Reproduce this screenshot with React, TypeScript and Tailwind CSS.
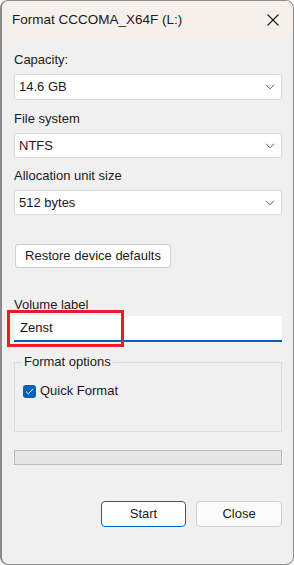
import React from 'react';

function Chevron() {
  return (
    <svg width="10" height="6" viewBox="0 0 10 6" className="shrink-0">
      <path d="M1 0.8 L5 4.8 L9 0.8" fill="none" stroke="#5c5c5c" strokeWidth="1" />
    </svg>
  );
}

function Field({ label, value, mt, h = 'h-[25px]' }: { label: string; value: string; mt: string; h?: string }) {
  return (
    <>
      <div className={`${mt} h-[16px] leading-[16px] text-[#1a1a1a]`}>{label}</div>
      <div
        className={`mt-[6px] ${h} flex items-center justify-between rounded-[3px] border border-[#dadada] bg-white pl-[4px] pr-[6px] text-[#1a1a1a]`}
      >
        <span>{value}</span>
        <Chevron />
      </div>
    </>
  );
}

export default function App() {
  return (
    <div className="w-[294px] h-[565px] overflow-hidden rounded-[8px] border border-[#8a8a8a] border-l-2 bg-[#f0f0f0] font-['Liberation_Sans',Arial,sans-serif] text-[13px]">
      {/* title bar */}
      <div className="flex h-[38px] items-center justify-between bg-[#f6f0ec] pl-[10px] pr-[14px]">
        <span className="text-[13.5px] text-[#1b1b1b]">Format CCCOMA_X64F (L:)</span>
        <svg width="12" height="12" viewBox="0 0 12 12">
          <path d="M0.5 0.5 L11.5 11.5 M11.5 0.5 L0.5 11.5" stroke="#1b1b1b" strokeWidth="1.1" />
        </svg>
      </div>

      <div className="flex flex-col pl-[12px] pr-[11px]">
        <Field label="Capacity:" value="14.6 GB" mt="mt-[13px]" h="h-[26px]" />
        <Field label="File system" value="NTFS" mt="mt-[11px]" />
        <Field label="Allocation unit size" value="512 bytes" mt="mt-[10px]" />

        <div className="mt-[29px] ml-px flex h-[24px] w-[156px] items-center justify-center rounded-[3px] border border-[#d0d0d0] bg-white text-[#1a1a1a]">
          Restore device defaults
        </div>

        <div className="mt-[29px] h-[16px] leading-[16px] text-[#1a1a1a]">Volume label</div>
        <div className="relative mt-[3px] h-[26px]">
          <div className="flex h-full items-center border-b-2 border-[#0062b8] bg-white pl-[6px] text-[#111]">Zenst</div>
          <div className="absolute -left-[7px] -top-[6px] h-[37px] w-[117px] border-[3px] border-[#e61e27]" />
        </div>

        <div className="relative mt-[20px] h-[70px] border border-[#dcdcdc]">
          <span className="absolute -top-[9px] left-[7px] bg-[#f0f0f0] px-[2px] leading-[16px] text-[#1a1a1a]">
            Format options
          </span>
          <div className="mt-[20px] ml-[8px] flex items-center gap-[4px] leading-[16px] text-[#1a1a1a]">
            <span className="flex h-[13px] w-[13px] items-center justify-center rounded-[3px] bg-[#0062b8]">
              <svg width="9" height="7" viewBox="0 0 9 7">
                <path d="M1 3.6 L3.4 5.8 L8 1" fill="none" stroke="#ffffff" strokeWidth="1" />
              </svg>
            </span>
            Quick Format
          </div>
        </div>

        <div className="mt-[18px] h-[15px] border border-[#bcbcbc] bg-[#e6e6e6]" />

        <div className="mt-[36px] flex justify-end gap-[10px]">
          <div className="flex h-[26px] w-[85px] items-center justify-center rounded-[4px] border border-[#0067c0] bg-white text-[#1a1a1a]">
            Start
          </div>
          <div className="flex h-[26px] w-[86px] items-center justify-center rounded-[4px] border border-[#d0d0d0] bg-[#fbfbfb] text-[#1a1a1a]">
            Close
          </div>
        </div>
      </div>
    </div>
  );
}
